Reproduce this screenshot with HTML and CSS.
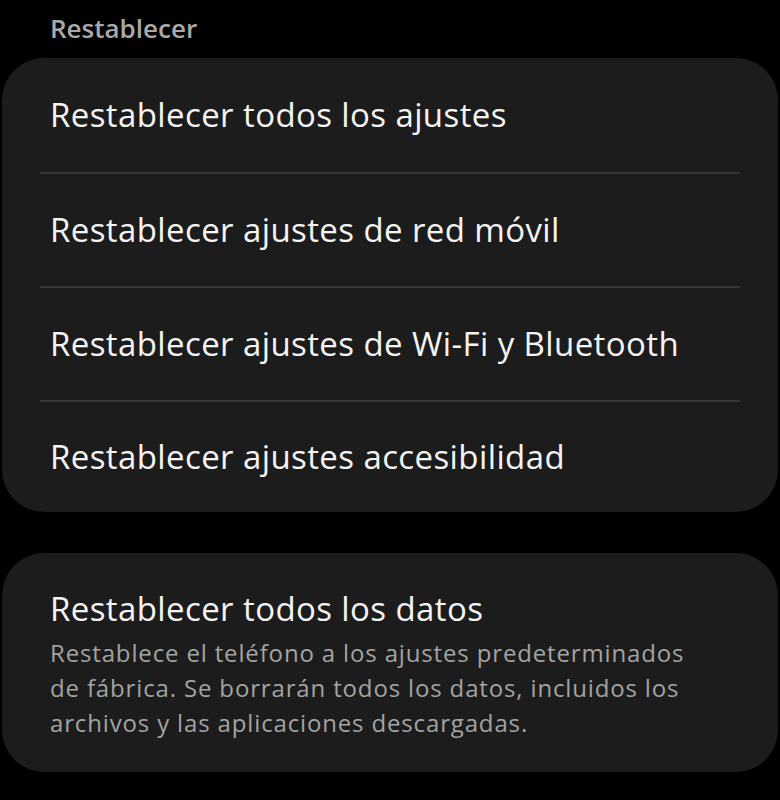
FILE: index.html
```html
<!DOCTYPE html>
<html lang="es">
  <head>
    <meta charset="UTF-8" />
    <meta name="viewport" content="width=device-width, initial-scale=1.0" />
    <title>Restablecer</title>
    <link rel="stylesheet" href="styles.css">
  </head>
  <body>
    <h2 class="section-title">Restablecer</h2>

    <div class="card">
      <div class="row">Restablecer todos los ajustes</div>
      <div class="row">Restablecer ajustes de red móvil</div>
      <div class="row">Restablecer ajustes de Wi-Fi y Bluetooth</div>
      <div class="row">Restablecer ajustes accesibilidad</div>
    </div>

    <div class="card card-single">
      <div class="item-title">Restablecer todos los datos</div>
      <div class="item-desc">
        Restablece el teléfono a los ajustes predeterminados de fábrica. Se
        borrarán todos los datos, incluidos los archivos y las aplicaciones
        descargadas.
      </div>
    </div>
  </body>
</html>
```

FILE: styles.css
```css
body {
  font-family: "Open Sans", Roboto, sans-serif;
  margin: 0;
  padding: 0;
  background-color: #000;
  color: #f4f4f4;
  min-height: 100vh;
}

.section-title {
  margin: 0;
  padding: 12px 50px 0;
  font-size: 26px;
  line-height: 32px;
  font-weight: 600;
  color: #a9a9a9;
  height: 46px;
}

.card {
  background-color: #1c1c1c;
  border-radius: 42px;
  margin: 0 2px;
}

.row {
  box-sizing: border-box;
  height: 114px;
  display: flex;
  align-items: center;
  padding: 0 48px;
  font-size: 33px;
  line-height: 40px;
  letter-spacing: 0.4px;
}

.row:last-child {
  height: 112px;
}

/* linea entre filas */
.row + .row {
  border-top: 2px solid #363636;
  margin: 0 38px;
  padding: 0 10px;
}

.card-single {
  margin-top: 41px;
  padding: 36px 48px 32px;
}

.item-title {
  font-size: 33px;
  line-height: 40px;
  letter-spacing: 0.4px;
  margin-bottom: 6px;
}

.item-desc {
  font-size: 24px;
  line-height: 35px;
  letter-spacing: 0.85px;
  color: #a3a3a3;
  padding-right: 40px;
}
```
